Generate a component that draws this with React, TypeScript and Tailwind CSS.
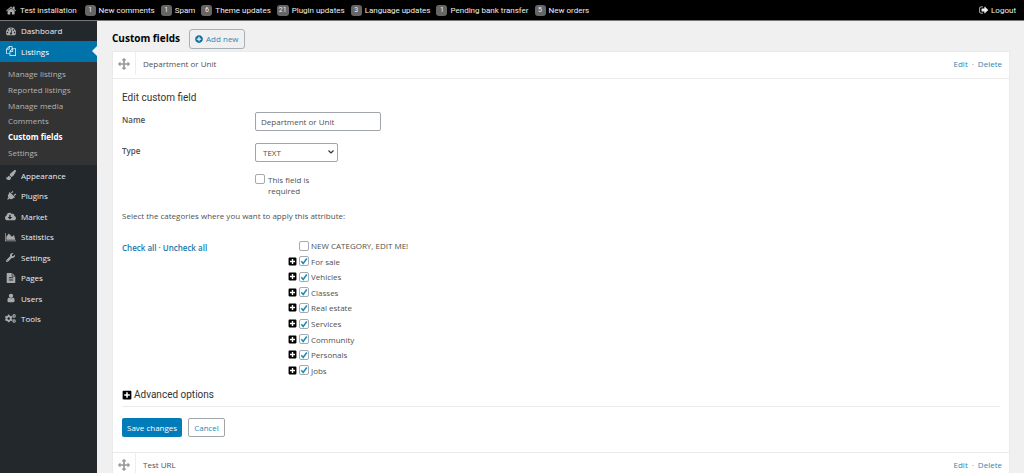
import {useState} from "react";
import type {ReactNode} from "react";
import {
    FaCloudDownloadAlt,
    FaCogs,
    FaPaintBrush,
    FaPlug,
    FaPlusCircle,
    FaPlusSquare,
    FaWrench
} from "react-icons/fa";

type NavItem = {
    label: string,
    icon: ReactNode
}

const HOME = "M1408 992v480q0 26-19 45t-45 19h-384v-384h-256v384h-384q-26 0-45-19t-19-45v-480q0-1 .5-3t.5-3l575-474 575 474q1 2 1 6zm223-69l-62 74q-8 9-21 11h-3q-13 0-21-7l-692-577-692 577q-12 8-24 7-13-2-21-11l-62-74q-8-10-7-23.5t11-21.5l719-599q32-26 76-26t76 26l244 204v-195q0-14 9-23t23-9h192q14 0 23 9t9 23v408l219 182q10 8 11 21.5t-7 23.5z";
const GAUGE = "M384 1152q0-53-37.5-90.5t-90.5-37.5-90.5 37.5-37.5 90.5 37.5 90.5 90.5 37.5 90.5-37.5 37.5-90.5zm192-448q0-53-37.5-90.5t-90.5-37.5-90.5 37.5-37.5 90.5 37.5 90.5 90.5 37.5 90.5-37.5 37.5-90.5zm428 481l101-382q6-26-7.5-48.5t-38.5-29.5-48 6.5-30 39.5l-101 382q-60 5-107 43.5t-63 98.5q-20 77 20 146t117 89 146-20 89-117q16-60-6-117t-72-91zm660-33q0-53-37.5-90.5t-90.5-37.5-90.5 37.5-37.5 90.5 37.5 90.5 90.5 37.5 90.5-37.5 37.5-90.5zm-640-640q0-53-37.5-90.5t-90.5-37.5-90.5 37.5-37.5 90.5 37.5 90.5 90.5 37.5 90.5-37.5 37.5-90.5zm448 192q0-53-37.5-90.5t-90.5-37.5-90.5 37.5-37.5 90.5 37.5 90.5 90.5 37.5 90.5-37.5 37.5-90.5zm320 448q0 261-141 483-19 29-54 29h-1402q-35 0-54-29-141-221-141-483 0-182 71-348t191-286 286-191 348-71 348 71 286 191 191 286 71 348z";
const FILES = "M1696 384q40 0 68 28t28 68v1216q0 40-28 68t-68 28h-960q-40 0-68-28t-28-68v-288h-544q-40 0-68-28t-28-68v-672q0-40 20-88t48-76l408-408q28-28 76-48t88-20h416q40 0 68 28t28 68v328q68-40 128-40h416zm-544 213l-299 299h299v-299zm-640-384l-299 299h299v-299zm196 647l316-316v-416h-384v416q0 40-28 68t-68 28h-416v640h512v-256q0-40 20-88t48-76zm956 804v-1152h-384v416q0 40-28 68t-68 28h-416v640h896z";
const USER = "M1536 1399q0 109-62.5 187t-150.5 78h-854q-88 0-150.5-78t-62.5-187q0-85 8.5-160.5t31.5-152 58.5-131 94-89 134.5-34.5q131 128 313 128t313-128q76 0 134.5 34.5t94 89 58.5 131 31.5 152 8.5 160.5zm-256-887q0 159-112.5 271.5t-271.5 112.5-271.5-112.5-112.5-271.5 112.5-271.5 271.5-112.5 271.5 112.5 112.5 271.5z";
const ARROWS = "M1792 896q0 26-19 45l-256 256q-19 19-45 19t-45-19-19-45v-128h-384v384h128q26 0 45 19t19 45-19 45l-256 256q-19 19-45 19t-45-19l-256-256q-19-19-19-45t19-45 45-19h128v-384h-384v128q0 26-19 45t-45 19-45-19l-256-256q-19-19-19-45t19-45l256-256q19-19 45-19t45 19 19 45v128h384v-384h-128q-26 0-45-19t-19-45 19-45l256-256q19-19 45-19t45 19l256 256q19 19 19 45t-19 45-45 19h-128v384h384v-128q0-26 19-45t45-19 45 19l256 256q19 19 19 45z";
const AREA = "M2048 1536v128h-2048v-1536h128v1408h1920zm-384-1024l256 896h-1664v-576l448-576 576 576z";
const FILE_TEXT = "M1596 476q14 14 28 36h-472v-472q22 14 36 28zm-476 164h544v1056q0 40-28 68t-68 28h-1344q-40 0-68-28t-28-68v-1600q0-40 28-68t68-28h800v544q0 40 28 68t68 28zm160 736v-64q0-14-9-23t-23-9h-704q-14 0-23 9t-9 23v64q0 14 9 23t23 9h704q14 0 23-9t9-23zm0-256v-64q0-14-9-23t-23-9h-704q-14 0-23 9t-9 23v64q0 14 9 23t23 9h704q14 0 23-9t9-23zm0-256v-64q0-14-9-23t-23-9h-704q-14 0-23 9t-9 23v64q0 14 9 23t23 9h704q14 0 23-9t9-23z";
const SIGN_OUT = "M704 1440q0 4 1 20t.5 26.5-3 23.5-10 19.5-20.5 6.5h-320q-119 0-203.5-84.5t-84.5-203.5v-704q0-119 84.5-203.5t203.5-84.5h320q13 0 22.5 9.5t9.5 22.5q0 4 1 20t.5 26.5-3 23.5-10 19.5-20.5 6.5h-320q-66 0-113 47t-47 113v704q0 66 47 113t113 47h312l11.5 1 11.5 3 8 5.5 7 9 2 13.5zm928-544q0 26-19 45l-544 544q-19 19-45 19t-45-19-19-45v-288h-448q-26 0-45-19t-19-45v-384q0-26 19-45t45-19h448v-288q0-26 19-45t45-19 45 19l544 544q19 19 19 45z";

function Glyph({ d, box = "0 0 1792 1792", className = "size-[10px]" }: { d: string, box?: string, className?: string }) {
    return (
        <svg viewBox={box} className={className} fill="currentColor" aria-hidden="true">
            <path d={d} />
        </svg>
    );
}

const notices = [
    { count: 1, label: "New comments" },
    { count: 1, label: "Spam" },
    { count: 6, label: "Theme updates" },
    { count: 21, label: "Plugin updates" },
    { count: 3, label: "Language updates" },
    { count: 1, label: "Pending bank transfer" },
    { count: 5, label: "New orders" }
];

const listingLinks = [ "Manage listings", "Reported listings", "Manage media", "Comments", "Custom fields", "Settings" ];

const navItems: NavItem[] = [
    { label: "Appearance", icon: <FaPaintBrush className="size-[10px]" /> },
    { label: "Plugins", icon: <FaPlug className="size-[10px] rotate-45" /> },
    { label: "Market", icon: <FaCloudDownloadAlt className="size-[11px]" /> },
    { label: "Statistics", icon: <Glyph d={AREA} box="0 0 2048 1792" className="w-[11px] h-[10px]" /> },
    { label: "Settings", icon: <FaWrench className="size-[9px]" /> },
    { label: "Pages", icon: <Glyph d={FILE_TEXT} /> },
    { label: "Users", icon: <Glyph d={USER} /> },
    { label: "Tools", icon: <FaCogs className="size-[11px]" /> }
];

const categories = [ "NEW CATEGORY, EDIT ME!", "For sale", "Vehicles", "Classes", "Real estate", "Services", "Community", "Personals", "Jobs" ];

function CheckBox({ id, checked, onChange }: { id: string, checked: boolean, onChange: () => void }) {
    return (
        <span className="relative flex size-[10px] shrink-0">
            <input
                id={id}
                type="checkbox"
                checked={checked}
                onChange={onChange}
                className="size-[10px] appearance-none rounded-[2px] border border-[#a5a9b0] bg-white"
            />
            {checked && (
                <svg viewBox="0 0 10 10" className="absolute inset-0 size-[10px] pointer-events-none" aria-hidden="true">
                    <path d="M2.3 5.2 4.2 7.4 7.8 2.5" fill="none" stroke="#1e8cbe" strokeWidth="1.6" />
                </svg>
            )}
        </span>
    );
}

function FieldHeader({ title }: { title: string }) {
    return (
        <div className="flex h-[26px] items-center pb-[3px]">
            <span className="flex h-[23px] w-[23px] shrink-0 items-center justify-center border-r border-[#eeeeee] text-[#999]">
                <Glyph d={ARROWS} className="size-3" />
            </span>
            <span className="flex-1 pl-[7px]">{title}</span>
            <span className="flex gap-1 pr-[7px] text-[#3584b0]">
                <a href="#edit">Edit</a>
                <span>·</span>
                <a href="#delete">Delete</a>
            </span>
        </div>
    );
}

export default function App() {

    const [ name, setName ] = useState("Department or Unit");
    const [ required, setRequired ] = useState(false);
    const [ selected, setSelected ] = useState<string[]>(categories.slice(1));

    const toggle = (category: string) => {
        setSelected(prev => prev.includes(category) ? prev.filter(c => c !== category) : [ ...prev, category ]);
    };

    return (
        <div className="flex h-screen flex-col overflow-hidden bg-[#f0f0f0] font-['Open_Sans',sans-serif] text-[8px] leading-[11px] text-[#505050]">

            <header className="flex h-[21px] shrink-0 items-center gap-[6px] border-b border-[#777] bg-black pl-[6px] pr-2 font-['Roboto',sans-serif] text-[#eee]">
                <a href="#home" className="mr-[2px] flex items-center gap-[3px]">
                    <Glyph d={HOME} className="size-[11px] text-[#aaa]" />
                    Test installation
                </a>
                {notices.map(notice => (
                    <a key={notice.label} href="#notices" className="flex items-center gap-[3px] whitespace-nowrap">
                        <span className="flex h-[11px] min-w-[11px] items-center justify-center rounded-[3px] bg-[#666] px-[2px] text-[7px]">{notice.count}</span>
                        {notice.label}
                    </a>
                ))}
                <a href="#logout" className="ml-auto flex items-center gap-[2px]">
                    <Glyph d={SIGN_OUT} />
                    Logout
                </a>
            </header>

            <div className="flex min-h-0 flex-1">

                <nav className="w-[97px] shrink-0 bg-[#23282d] text-[#eee]">
                    <a href="#dashboard" className="flex h-5 items-center pb-px">
                        <span className="flex w-[21px] justify-center text-[#aaa]"><Glyph d={GAUGE} /></span>
                        Dashboard
                    </a>
                    <a href="#listings" className="relative flex h-[21px] items-center bg-[#0073aa] pb-px text-white">
                        <span className="flex w-[21px] justify-center"><Glyph d={FILES} /></span>
                        Listings
                        <svg viewBox="0 0 5 10" className="absolute right-0 h-[10px] w-[5px] text-[#f0f0f0]" aria-hidden="true">
                            <path d="M5 0 0 5 5 10z" fill="currentColor" />
                        </svg>
                    </a>
                    <ul className="grid h-[103px] auto-rows-fr items-center bg-[#333] pt-1 pb-[5px] pl-2 text-[#b4b4b4]">
                        {listingLinks.map(link => (
                            <li key={link}>
                                <a href="#listings" className={link === "Custom fields" ? "block font-bold text-white" : "block"}>{link}</a>
                            </li>
                        ))}
                    </ul>
                    <div className="grid h-[164px] auto-rows-fr">
                        {navItems.map(item => (
                            <a key={item.label} href="#section" className="flex items-center">
                                <span className="flex w-[21px] justify-center text-[#aaa]">{item.icon}</span>
                                {item.label}
                            </a>
                        ))}
                    </div>
                </nav>

                <main className="min-w-0 flex-1 pl-[15px] pr-[14px]">

                    <div className="flex items-center gap-[9px] pt-2 pb-[2px]">
                        <h1 className="pb-[2px] text-[10px] font-bold text-black">Custom fields</h1>
                        <button type="button" className="flex h-5 items-center gap-[3px] rounded-[3px] border border-[#a5b0b8] px-[5px] pb-px text-[#3584b0]">
                            <FaPlusCircle className="size-2 text-[#0f6f9f]" />
                            Add new
                        </button>
                    </div>

                    <section className="border border-[#eaeaea] bg-white">
                        <FieldHeader title="Department or Unit" />

                        <form className="border-y border-[#eaeaea] px-[9px] pt-[13px] pb-[15px]" onSubmit={e => e.preventDefault()}>
                            <h2 className="font-['Roboto',sans-serif] text-[10px] leading-3 text-[#333]">Edit custom field</h2>

                            <div className="mt-2 flex">
                                <label htmlFor="name" className="w-[133px] pt-[2px] font-semibold">Name</label>
                                <input
                                    id="name"
                                    value={name}
                                    onChange={e => setName(e.currentTarget.value)}
                                    className="h-[19px] w-[126px] rounded-[2px] border border-[#a0a5aa] bg-white px-[5px] outline-none"
                                />
                            </div>

                            <div className="mt-3 flex">
                                <label htmlFor="type" className="w-[133px] pt-[2px] font-semibold">Type</label>
                                <span className="relative flex">
                                    <select id="type" className="h-[19px] w-[83px] appearance-none rounded-[2px] border border-[#a0a5aa] bg-white px-[7px]">
                                        <option>TEXT</option>
                                        <option>TEXTAREA</option>
                                        <option>DROPDOWN</option>
                                    </select>
                                    <svg viewBox="0 0 6 4" className="pointer-events-none absolute right-1 top-[7px] h-1 w-[6px]" aria-hidden="true">
                                        <path d="M.5.5 3 3 5.5.5" fill="none" stroke="#333" strokeWidth="1.2" />
                                    </svg>
                                </span>
                            </div>

                            <div className="mt-3 ml-[133px] flex w-[72px] gap-[3px]">
                                <CheckBox id="required" checked={required} onChange={() => setRequired(!required)} />
                                <label htmlFor="required">This field is required</label>
                            </div>

                            <p className="mt-[14px]">Select the categories where you want to apply this attribute:</p>

                            <div className="mt-[17px] flex">
                                <div className="flex w-[166px] gap-[2px] pt-1 font-semibold text-[#2079ab]">
                                    <button type="button" className="h-[11px]" onClick={() => setSelected(categories)}>Check all</button>
                                    <span>·</span>
                                    <button type="button" className="h-[11px]" onClick={() => setSelected([])}>Uncheck all</button>
                                </div>
                                <ul className="grid h-[140px] auto-rows-fr">
                                    {categories.map((category, index) => (
                                        <li key={category} className="flex items-center gap-[2px]">
                                            <span className="w-[9px] text-black">
                                                {index > 0 && <FaPlusSquare className="size-[9px]" />}
                                            </span>
                                            <CheckBox id={`category-${index}`} checked={selected.includes(category)} onChange={() => toggle(category)} />
                                            <label htmlFor={`category-${index}`}>{category}</label>
                                        </li>
                                    ))}
                                </ul>
                            </div>

                            <h3 className="mt-[11px] flex items-center gap-[2px] border-b border-[#eaeaea] pb-[5px] font-['Roboto',sans-serif] text-[10px] leading-3 text-[#333]">
                                <FaPlusSquare className="size-[10px] text-black" />
                                Advanced options
                            </h3>

                            <div className="mt-[11px] flex gap-[6px]">
                                <button type="submit" className="h-[19px] rounded-[2px] bg-[#007cba] px-[5px] text-white">Save changes</button>
                                <button type="button" className="h-[19px] rounded-[2px] border border-[#a0a5aa] bg-white px-[5px] text-[#3584b0]">Cancel</button>
                            </div>
                        </form>

                        <FieldHeader title="Test URL" />
                    </section>
                </main>
            </div>
        </div>
    );
}
